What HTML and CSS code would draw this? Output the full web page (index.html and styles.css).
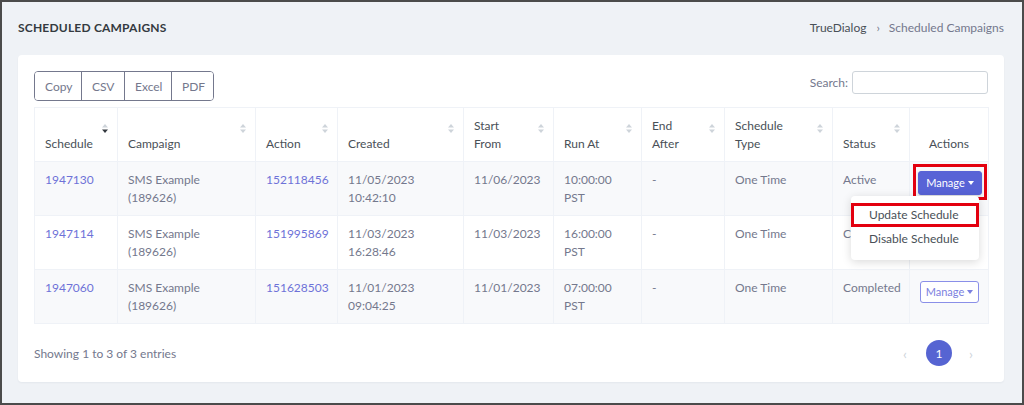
FILE: index.html
```html
<!DOCTYPE html>
<html lang="en">
<head>
<meta charset="utf-8">
<title>Scheduled Campaigns</title>
<link rel="stylesheet" href="styles.css">
</head>
<body>
<div class="frame">
  <div class="page-head">
    <h1 class="page-title">SCHEDULED CAMPAIGNS</h1>
    <div class="crumbs"><span>TrueDialog</span><span class="sep">›</span><span>Scheduled Campaigns</span></div>
  </div>
  <div class="card">
    <div class="toolbar">
      <div class="btn-group">
        <button class="gbtn">Copy</button><button class="gbtn">CSV</button><button class="gbtn">Excel</button><button class="gbtn">PDF</button>
      </div>
      <label class="search">Search: <input type="text" class="search-input"></label>
    </div>
    <table class="grid">
      <colgroup>
        <col style="width:83px"><col style="width:138px"><col style="width:82px"><col style="width:126px"><col style="width:90px"><col style="width:88px"><col style="width:83px"><col style="width:108px"><col style="width:77px"><col style="width:79px">
      </colgroup>
      <thead>
        <tr>
          <th class="sort desc">Schedule<span class="sicon"><svg width="6" height="9" viewBox="0 0 6 9"><polygon class="up" points="3,0 6,3.5 0,3.5"/><polygon class="dn" points="0,5.5 6,5.5 3,9"/></svg></span></th>
          <th class="sort">Campaign<span class="sicon"><svg width="6" height="9" viewBox="0 0 6 9"><polygon class="up" points="3,0 6,3.5 0,3.5"/><polygon class="dn" points="0,5.5 6,5.5 3,9"/></svg></span></th>
          <th class="sort">Action<span class="sicon"><svg width="6" height="9" viewBox="0 0 6 9"><polygon class="up" points="3,0 6,3.5 0,3.5"/><polygon class="dn" points="0,5.5 6,5.5 3,9"/></svg></span></th>
          <th class="sort">Created<span class="sicon"><svg width="6" height="9" viewBox="0 0 6 9"><polygon class="up" points="3,0 6,3.5 0,3.5"/><polygon class="dn" points="0,5.5 6,5.5 3,9"/></svg></span></th>
          <th class="sort">Start<br>From<span class="sicon"><svg width="6" height="9" viewBox="0 0 6 9"><polygon class="up" points="3,0 6,3.5 0,3.5"/><polygon class="dn" points="0,5.5 6,5.5 3,9"/></svg></span></th>
          <th class="sort">Run At<span class="sicon"><svg width="6" height="9" viewBox="0 0 6 9"><polygon class="up" points="3,0 6,3.5 0,3.5"/><polygon class="dn" points="0,5.5 6,5.5 3,9"/></svg></span></th>
          <th class="sort">End<br>After<span class="sicon"><svg width="6" height="9" viewBox="0 0 6 9"><polygon class="up" points="3,0 6,3.5 0,3.5"/><polygon class="dn" points="0,5.5 6,5.5 3,9"/></svg></span></th>
          <th class="sort">Schedule<br>Type<span class="sicon"><svg width="6" height="9" viewBox="0 0 6 9"><polygon class="up" points="3,0 6,3.5 0,3.5"/><polygon class="dn" points="0,5.5 6,5.5 3,9"/></svg></span></th>
          <th class="sort">Status<span class="sicon"><svg width="6" height="9" viewBox="0 0 6 9"><polygon class="up" points="3,0 6,3.5 0,3.5"/><polygon class="dn" points="0,5.5 6,5.5 3,9"/></svg></span></th>
          <th class="center">Actions</th>
        </tr>
      </thead>
      <tbody>
        <tr class="odd">
          <td><a class="lnk">1947130</a></td>
          <td>SMS Example<br>(189626)</td>
          <td><a class="lnk">152118456</a></td>
          <td>11/05/2023<br>10:42:10</td>
          <td>11/06/2023</td>
          <td>10:00:00<br>PST</td>
          <td>-</td>
          <td>One Time</td>
          <td>Active</td>
          <td class="center">
            <div class="dd">
              <button class="mbtn filled">Manage <span class="caret"></span></button>
              <span class="hl-box"></span>
              <div class="menu">
                <div class="menu-item hl">Update Schedule</div>
                <div class="menu-item">Disable Schedule</div>
              </div>
            </div>
          </td>
        </tr>
        <tr>
          <td><a class="lnk">1947114</a></td>
          <td>SMS Example<br>(189626)</td>
          <td><a class="lnk">151995869</a></td>
          <td>11/03/2023<br>16:28:46</td>
          <td>11/03/2023</td>
          <td>16:00:00<br>PST</td>
          <td>-</td>
          <td>One Time</td>
          <td>Completed</td>
          <td class="center"><button class="mbtn">Manage <span class="caret"></span></button></td>
        </tr>
        <tr class="odd">
          <td><a class="lnk">1947060</a></td>
          <td>SMS Example<br>(189626)</td>
          <td><a class="lnk">151628503</a></td>
          <td>11/01/2023<br>09:04:25</td>
          <td>11/01/2023</td>
          <td>07:00:00<br>PST</td>
          <td>-</td>
          <td>One Time</td>
          <td>Completed</td>
          <td class="center"><button class="mbtn">Manage <span class="caret"></span></button></td>
        </tr>
      </tbody>
    </table>
    <div class="foot">
      <div class="info">Showing 1 to 3 of 3 entries</div>
      <div class="pager">
        <span class="pg prev">‹</span>
        <span class="pg cur">1</span>
        <span class="pg next">›</span>
      </div>
    </div>
  </div>
</div>
</body>
</html>
```
FILE: styles.css
```css
* { box-sizing: border-box; }
html, body { margin: 0; padding: 0; }
body {
  font-family: Lato, "Liberation Sans", sans-serif;
  font-size: 12px;
  color: #74788d;
}
.frame {
  width: 1024px;
  height: 405px;
  border: 2px solid #4b4b4b;
  background: #eff2f6;
  padding: 0 18px 0 16px;
  overflow: hidden;
}
.page-head {
  height: 50px;
  margin-bottom: 3px;
  display: flex;
  align-items: center;
  justify-content: space-between;
}
.page-title {
  margin: 0;
  font-size: 12px;
  font-weight: 700;
  color: #343a40;
  letter-spacing: 0.2px;
}
.crumbs {
  display: flex;
  color: #74788d;
  font-size: 12px;
}
.crumbs .sep { margin: 0 9px 0 10px; color: #74788d; }
.crumbs span:first-child { color: #495057; }

.card {
  background: #fff;
  border-radius: 4px;
  box-shadow: 0 1px 2px rgba(18, 38, 63, 0.05);
  padding: 16px;
  height: 327px;
}
.toolbar {
  display: flex;
  justify-content: space-between;
  align-items: flex-start;
  height: 30px;
}
.btn-group {
  display: flex;
  border: 1px solid #74788d;
  border-radius: 4px;
  overflow: hidden;
  height: 30px;
}
.gbtn {
  font: inherit;
  color: #74788d;
  background: #fff;
  border: 0;
  border-left: 1px solid #74788d;
  height: 28px;
  padding: 0 10px;
}
.gbtn:first-child { border-left: 0; width: 46px; }
.gbtn:nth-child(2) { width: 43px; }
.gbtn:nth-child(3) { width: 47px; }
.gbtn:nth-child(4) { width: 42px; }
.search {
  display: flex;
  align-items: center;
  gap: 4px;
  color: #74788d;
  height: 23px;
}
.search-input {
  width: 136px;
  height: 23px;
  border: 1px solid #ced4da;
  border-radius: 3px;
  margin: 0;
  padding: 0 6px;
}

.grid {
  margin-top: 6px;
  width: 954px;
  table-layout: fixed;
  border-collapse: collapse;
  border: 1px solid #eff2f7;
}
.grid th, .grid td {
  border: 1px solid #eff2f7;
  padding: 9px 10px 8px;
  line-height: 18px;
  text-align: left;
  vertical-align: top;
}
.grid th {
  position: relative;
  font-weight: 400;
  color: #495057;
  vertical-align: bottom;
  background: #fff;
}
.grid th.center, .grid td.center { text-align: center; }
.grid tr.odd td { background: #f8f9fb; }
.sicon {
  position: absolute;
  top: 16px;
  right: 9px;
  line-height: 0;
}
.sicon polygon { fill: #ced4da; }
.sort.desc .sicon .dn { fill: #343a40; }
.lnk { color: #6e72d8; text-decoration: none; }

.mbtn {
  font: inherit;
  font-size: 11px;
  color: #7b80e0;
  background: #fff;
  border: 1px solid #8a8fe8;
  border-radius: 3px;
  height: 22px;
  width: 59px;
  padding: 0;
  margin-top: 2px;
  display: inline-flex;
  align-items: center;
  justify-content: center;
  gap: 3px;
}
.mbtn.filled {
  background: #5863d6;
  border-color: #5863d6;
  color: #fff;
  width: 64px;
  height: 24px;
  margin-top: 0;
  box-shadow: 0 1px 3px rgba(0,0,0,.15);
}
.caret {
  display: inline-block;
  width: 0;
  height: 0;
  border-left: 3.5px solid transparent;
  border-right: 3.5px solid transparent;
  border-top: 4px solid currentColor;
}
.dd {
  position: relative;
  display: inline-block;
  vertical-align: top;
  margin: 0 -3px 0 -2px;
}
.hl-box {
  position: absolute;
  left: -5px;
  right: -5px;
  top: -7px;
  bottom: -5px;
  border: 3px solid #e3000f;
  pointer-events: none;
}
.menu {
  position: absolute;
  top: 25px;
  right: 3px;
  width: 128px;
  background: #fff;
  border-radius: 4px;
  box-shadow: 0 2px 10px rgba(0, 0, 0, 0.15);
  padding: 7px 0 9px;
  text-align: left;
  z-index: 2;
}
.menu-item {
  height: 24px;
  line-height: 24px;
  padding-left: 18px;
  color: #495057;
  font-size: 12px;
  white-space: nowrap;
}
.menu-item.hl {
  outline: 3px solid #e3000f;
  outline-offset: -3px;
}

.foot {
  margin-top: 16px;
  display: flex;
  justify-content: space-between;
  align-items: center;
  height: 26px;
}
.info { color: #74788d; }
.pager { display: flex; align-items: center; margin-right: 4px; }
.pg {
  width: 26px;
  height: 26px;
  display: flex;
  align-items: center;
  justify-content: center;
  color: #ced4da;
  font-size: 14px;
}
.pg.prev { margin-right: 8px; }
.pg.next { margin-left: 6px; }
.pg.cur {
  background: #5664d2;
  color: #fff;
  border-radius: 50%;
  font-size: 12px;
}
```
